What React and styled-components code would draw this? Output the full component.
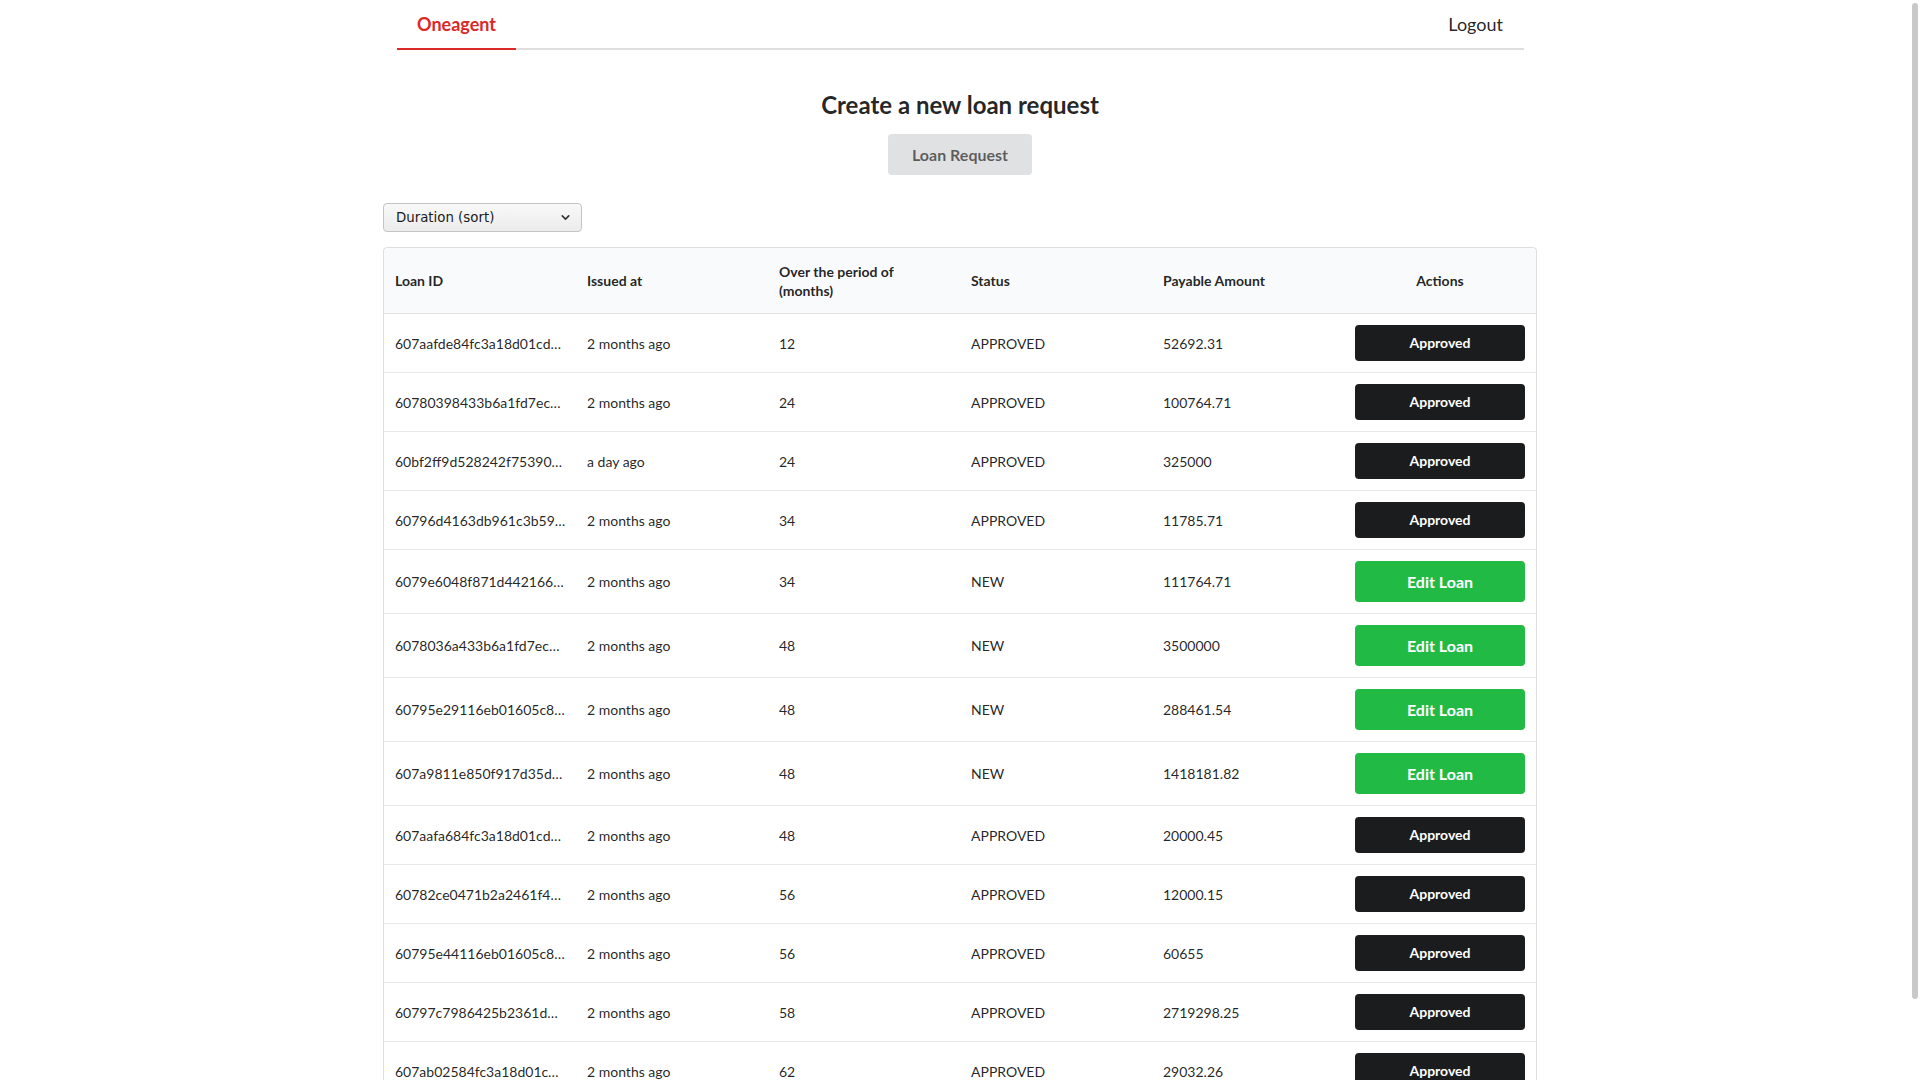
import React, { useState } from 'react';
import styled, { createGlobalStyle } from 'styled-components';
import { ChevronDown } from 'lucide-react';

const GlobalStyle = createGlobalStyle`
  body {
    margin: 0;
    background: #fff;
    font-family: Lato, "Noto Sans", sans-serif;
    font-size: 14px;
    color: rgba(0, 0, 0, 0.87);
  }
`;

const Page = styled.div`
  width: 1154px;
  margin: 0 auto;
`;

const Nav = styled.nav`
  display: flex;
  justify-content: space-between;
  margin: 0 13px 0 14px;
  border-bottom: 2px solid rgba(34, 36, 38, 0.15);
`;

const NavItem = styled.a`
  display: flex;
  align-items: center;
  height: 48px;
  padding: 0 ${(p) => (p.active ? '20px' : '21px')};
  font-size: 18px;
  font-weight: ${(p) => (p.active ? 700 : 400)};
  color: ${(p) => (p.active ? '#db2828' : 'rgba(0, 0, 0, 0.87)')};
  border-bottom: 2px solid ${(p) => (p.active ? '#db2828' : 'transparent')};
  margin-bottom: -2px;
  cursor: pointer;
`;

const Hero = styled.section`
  display: flex;
  flex-direction: column;
  align-items: center;
  padding-top: 39px;
`;

const Title = styled.h2`
  margin: 0 0 14px;
  font-size: 24px;
  line-height: 31px;
  font-weight: 700;
  color: rgba(0, 0, 0, 0.87);
`;

const GreyButton = styled.button`
  font-family: Lato, sans-serif;
  font-size: 16px;
  font-weight: 700;
  line-height: 1em;
  padding: 12.5px 24px;
  border: none;
  border-radius: 4px;
  background: #e0e1e2;
  color: rgba(0, 0, 0, 0.6);
  cursor: pointer;
`;

const SelectWrap = styled.div`
  position: relative;
  width: 199px;
  margin: 28px 0 15px;
`;

const SortSelect = styled.select`
  display: block;
  width: 100%;
  height: 29px;
  appearance: none;
  font-family: "DejaVu Sans", sans-serif;
  font-size: 13.33px;
  color: #1a1a1a;
  padding: 0 28px 0 12px;
  background: linear-gradient(#f8f8f8, #ececec);
  border: 1px solid #c4c4c4;
  border-radius: 4px;
  outline: none;
`;

const Caret = styled.span`
  position: absolute;
  right: 10px;
  top: 8px;
  display: flex;
  pointer-events: none;
  color: #333;
`;

const Table = styled.table`
  width: 100%;
  table-layout: fixed;
  border-collapse: separate;
  border-spacing: 0;
  border: 1px solid rgba(34, 36, 38, 0.15);
  border-radius: 4px;
  margin-bottom: 8px;
`;

const Th = styled.th`
  background: #f9fafb;
  padding: 13.5px 11px;
  text-align: ${(p) => (p.center ? 'center' : 'left')};
  font-weight: 700;
  line-height: 19px;
  border-bottom: 1px solid rgba(34, 36, 38, 0.1);
  &:first-child { border-top-left-radius: 4px; }
  &:last-child { border-top-right-radius: 4px; }
`;

const Td = styled.td`
  padding: 11px 10.5px 11px 11px;
  vertical-align: middle;
  line-height: 19px;
  border-top: ${(p) => (p.first ? 'none' : '1px solid rgba(34, 36, 38, 0.1)')};
  white-space: nowrap;
  overflow: hidden;
  text-overflow: ellipsis;
  &:last-child { padding-right: 11px; }
`;

const ActionButton = styled.button`
  display: block;
  width: 100%;
  font-family: Lato, sans-serif;
  font-weight: 700;
  font-size: ${(p) => (p.edit ? '16px' : '14px')};
  line-height: 1em;
  padding: ${(p) => (p.edit ? '12.5px 0' : '11px 0')};
  border: none;
  border-radius: 4px;
  color: #fff;
  background: ${(p) => (p.edit ? '#21ba45' : '#1b1c1d')};
  cursor: pointer;
`;

// overlay scrollbar thumb as seen in the screenshot
const ScrollThumb = styled.div`
  position: fixed;
  top: 3px;
  right: 2px;
  width: 6px;
  height: 996px;
  border-radius: 3px;
  background: #c9c9c9;
`;

const loans = [
  ['607aafde84fc3a18d01cd2e5', '2 months ago', 12, 'APPROVED', '52692.31'],
  ['60780398433b6a1fd7ec1b20', '2 months ago', 24, 'APPROVED', '100764.71'],
  ['60bf2ff9d528242f75390a14', 'a day ago', 24, 'APPROVED', '325000'],
  ['60796d4163db961c3b59e7a1', '2 months ago', 34, 'APPROVED', '11785.71'],
  ['6079e6048f871d4421660c93', '2 months ago', 34, 'NEW', '111764.71'],
  ['6078036a433b6a1fd7ec1b1f', '2 months ago', 48, 'NEW', '3500000'],
  ['60795e29116eb01605c8a4d2', '2 months ago', 48, 'NEW', '288461.54'],
  ['607a9811e850f917d35d6b08', '2 months ago', 48, 'NEW', '1418181.82'],
  ['607aafa684fc3a18d01cd2e3', '2 months ago', 48, 'APPROVED', '20000.45'],
  ['60782ce0471b2a2461f4c5a8', '2 months ago', 56, 'APPROVED', '12000.15'],
  ['60795e44116eb01605c8a4d5', '2 months ago', 56, 'APPROVED', '60655'],
  ['60797c7986425b2361d9e4f7', '2 months ago', 58, 'APPROVED', '2719298.25'],
  ['607ab02584fc3a18d01cd301', '2 months ago', 62, 'APPROVED', '29032.26'],
  ['607ab0e784fc3a18d01cd30a', '2 months ago', 72, 'APPROVED', '41250.00'],
];

const App = () => {
  const [sort, setSort] = useState('duration');

  return (
    <Page>
      <GlobalStyle />
      <ScrollThumb />
      <Nav>
        <NavItem active>Oneagent</NavItem>
        <NavItem>Logout</NavItem>
      </Nav>
      <Hero>
        <Title>Create a new loan request</Title>
        <GreyButton>Loan Request</GreyButton>
      </Hero>
      <SelectWrap>
        <SortSelect value={sort} onChange={(e) => setSort(e.target.value)}>
          <option value="duration">Duration (sort)</option>
          <option value="amount">Amount (sort)</option>
          <option value="date">Issued at (sort)</option>
        </SortSelect>
        <Caret>
          <ChevronDown size={13} strokeWidth={3} />
        </Caret>
      </SelectWrap>
      <Table>
        <thead>
          <tr>
            <Th>Loan ID</Th>
            <Th>Issued at</Th>
            <Th>Over the period of (months)</Th>
            <Th>Status</Th>
            <Th>Payable Amount</Th>
            <Th center>Actions</Th>
          </tr>
        </thead>
        <tbody>
          {loans.map(([id, issued, months, status, amount], i) => (
            <tr key={id}>
              <Td first={i === 0}>{id}</Td>
              <Td first={i === 0}>{issued}</Td>
              <Td first={i === 0}>{months}</Td>
              <Td first={i === 0}>{status}</Td>
              <Td first={i === 0}>{amount}</Td>
              <Td first={i === 0}>
                {status === 'NEW' ? (
                  <ActionButton edit>Edit Loan</ActionButton>
                ) : (
                  <ActionButton>Approved</ActionButton>
                )}
              </Td>
            </tr>
          ))}
        </tbody>
      </Table>
    </Page>
  );
};

export default App;
